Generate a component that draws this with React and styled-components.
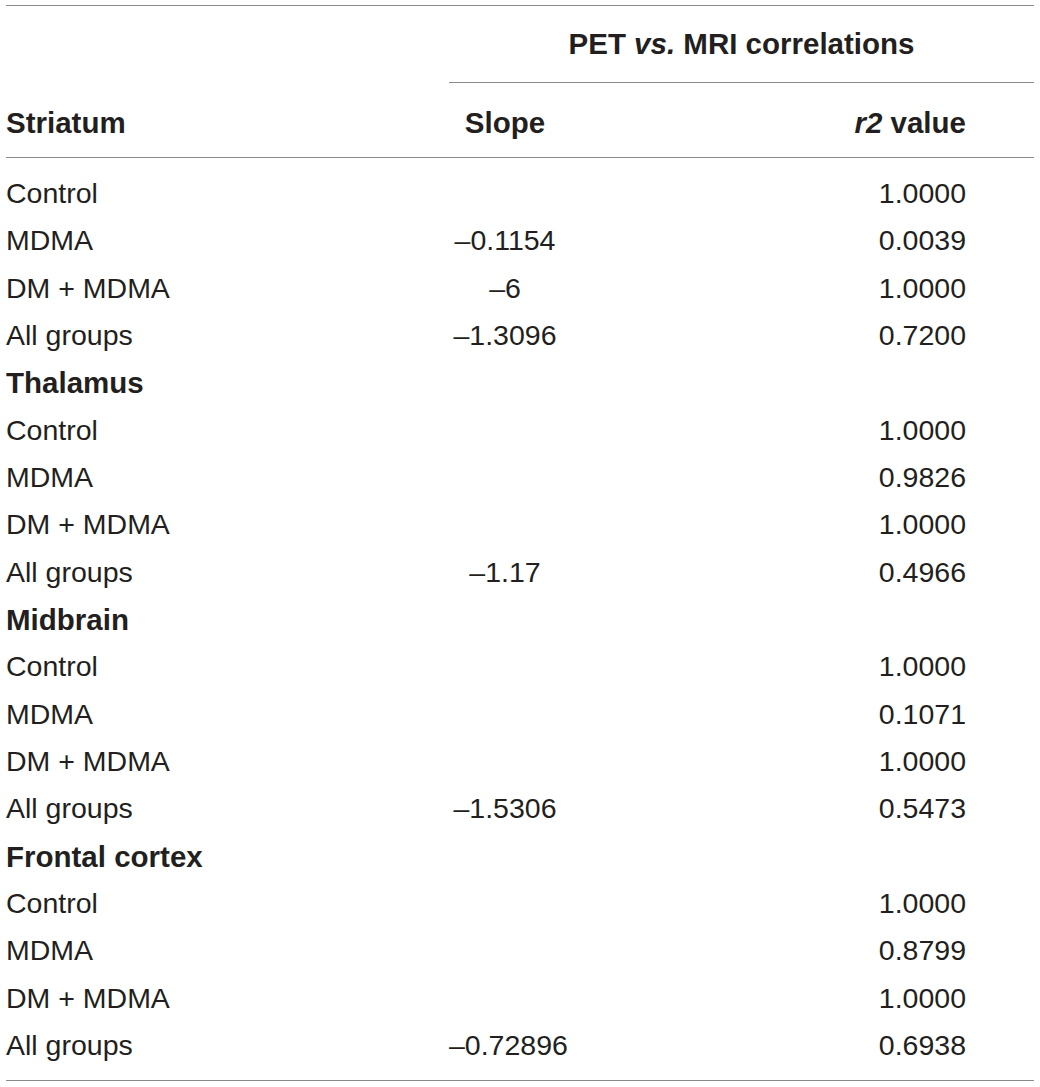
import React from 'react';
import styled, {createGlobalStyle} from 'styled-components';

const GlobalStyle = createGlobalStyle`
  body {
    margin: 0;
    background: #ffffff;
  }
`;

const Page = styled.div`
  padding: 5px 6px 0 6px;
  font-family: "Liberation Sans", Arial, Helvetica, sans-serif;
  font-size: 28.5px;
  color: #231f20;
`;

const Table = styled.div`
  display: grid;
  grid-template-columns: 443px 112px 1fr;
  border-top: 1px solid #8a8a8a;
  border-bottom: 1px solid #8a8a8a;
`;

const SpanHead = styled.div`
  grid-column: 2 / 4;
  height: 76px;
  line-height: 76px;
  text-align: center;
  font-size: 29.5px;
  font-weight: bold;
  border-bottom: 1px solid #8a8a8a;
`;

const Blank = styled.div`
  height: 76px;
`;

const HeadCell = styled.div`
  height: 75px;
  padding-top: 4px;
  box-sizing: border-box;
  line-height: 71px;
  font-size: 29.5px;
  font-weight: bold;
  border-bottom: 1px solid #8a8a8a;
  text-align: ${p => p.$align || 'left'};
  padding-right: ${p => (p.$align === 'right' ? '68px' : '0')};
  white-space: nowrap;
`;

const Body = styled.div`
  grid-column: 1 / 4;
  display: grid;
  grid-template-columns: 443px 112px 1fr;
  padding: 12px 0 11px 0;
`;

const Cell = styled.div`
  height: 47.33px;
  line-height: 47.33px;
  white-space: nowrap;
  font-size: ${p => (p.$bold ? '29.5px' : 'inherit')};
  font-weight: ${p => (p.$bold ? 'bold' : 'normal')};
  text-align: ${p => p.$align || 'left'};
  padding-right: ${p => (p.$align === 'right' ? '68px' : '0')};
`;

const groups = [
  {
    name: null,
    rows: [
      ['Control', '', '1.0000'],
      ['MDMA', '–0.1154', '0.0039'],
      ['DM + MDMA', '–6', '1.0000'],
      ['All groups', '–1.3096', '0.7200']
    ]
  },
  {
    name: 'Thalamus',
    rows: [
      ['Control', '', '1.0000'],
      ['MDMA', '', '0.9826'],
      ['DM + MDMA', '', '1.0000'],
      ['All groups', '–1.17', '0.4966']
    ]
  },
  {
    name: 'Midbrain',
    rows: [
      ['Control', '', '1.0000'],
      ['MDMA', '', '0.1071'],
      ['DM + MDMA', '', '1.0000'],
      ['All groups', '–1.5306', '0.5473']
    ]
  },
  {
    name: 'Frontal cortex',
    rows: [
      ['Control', '', '1.0000'],
      ['MDMA', '', '0.8799'],
      ['DM + MDMA', '', '1.0000'],
      ['All groups', '–0.72896', '0.6938']
    ]
  }
];

export default function App() {
  return (
    <Page>
      <GlobalStyle />
      <Table>
        <Blank />
        <SpanHead>PET <i>vs.</i> MRI correlations</SpanHead>
        <HeadCell>Striatum</HeadCell>
        <HeadCell $align="center">Slope</HeadCell>
        <HeadCell $align="right"><i>r2</i> value</HeadCell>
        <Body>
          {groups.map((g, gi) => (
            <React.Fragment key={gi}>
              {g.name && (
                <>
                  <Cell $bold>{g.name}</Cell>
                  <Cell />
                  <Cell />
                </>
              )}
              {g.rows.map((r, ri) => (
                <React.Fragment key={ri}>
                  <Cell>{r[0]}</Cell>
                  <Cell $align="center">{r[1]}</Cell>
                  <Cell $align="right">{r[2]}</Cell>
                </React.Fragment>
              ))}
            </React.Fragment>
          ))}
        </Body>
      </Table>
    </Page>
  );
}
